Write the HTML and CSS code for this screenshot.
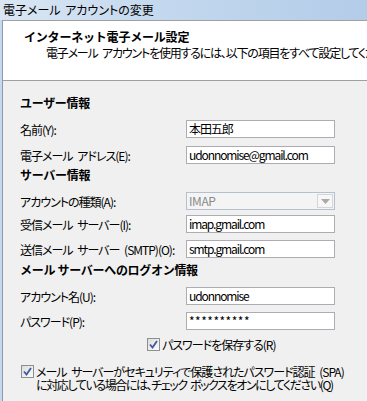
FILE: index.html
```html
<!DOCTYPE html>
<html lang="ja">
<head>
  <meta charset="UTF-8" />
  <title>電子メール アカウントの変更</title>
  <link rel="stylesheet" href="styles.css">
</head>
<body>
  <div class="window">
    <div class="titlebar">電子メール アカウントの変更</div>

    <div class="frame">
      <!-- Header -->
      <div class="header">
        <div class="header-title">インターネット電子メール設定</div>
        <div class="header-sub">電子メール アカウントを使用するには、以下の項目をすべて設定してください。</div>
      </div>

      <!-- Form -->
      <div class="form">
        <div class="section h-user">ユーザー情報</div>
        <div class="row r-name">
          <label class="label">名前(Y):</label>
          <div class="field">本田五郎</div>
        </div>
        <div class="row r-mail">
          <label class="label">電子メール アドレス(E):</label>
          <div class="field">udonnomise@gmail.com</div>
        </div>

        <div class="section h-server">サーバー情報</div>
        <div class="row r-type">
          <label class="label">アカウントの種類(A):</label>
          <div class="combo">
            <span class="combo-text">IMAP</span>
            <span class="combo-btn">
              <svg width="9" height="5" viewBox="0 0 9 5"><path d="M0 0h9L4.5 5z" fill="#a9a9a9"/></svg>
            </span>
          </div>
        </div>
        <div class="row r-in">
          <label class="label">受信メール サーバー(I):</label>
          <div class="field">imap.gmail.com</div>
        </div>
        <div class="row r-out">
          <label class="label">送信メール サーバー (SMTP)(O):</label>
          <div class="field">smtp.gmail.com</div>
        </div>

        <div class="section h-logon">メール サーバーへのログオン情報</div>
        <div class="row r-account">
          <label class="label">アカウント名(U):</label>
          <div class="field">udonnomise</div>
        </div>
        <div class="row r-pass">
          <label class="label">パスワード(P):</label>
          <div class="field pass">**********</div>
        </div>

        <div class="check c-save">
          <span class="box">
            <svg width="9" height="9" viewBox="0 0 9 9"><path d="M1 4.5l2.5 3L8 1" fill="none" stroke="#3d5a9c" stroke-width="1.8"/></svg>
          </span>
          <span class="check-text">パスワードを保存する(R)</span>
        </div>

        <div class="check c-spa">
          <span class="box">
            <svg width="9" height="9" viewBox="0 0 9 9"><path d="M1 4.5l2.5 3L8 1" fill="none" stroke="#3d5a9c" stroke-width="1.8"/></svg>
          </span>
          <span class="check-text">
            <span class="line">メール サーバーがセキュリティで保護されたパスワード認証 (SPA)</span>
            <span class="line tight">に対応している場合には、チェック ボックスをオンにしてください(Q)</span>
          </span>
        </div>
      </div>
    </div>
  </div>
</body>
</html>
```

FILE: styles.css
```css
body {
  margin: 0;
  padding: 0;
  width: 367px;
  height: 401px;
  overflow: hidden;
  background-color: #f0f0f0;
  font-family: "Noto Sans CJK JP", "Liberation Sans", sans-serif;
  font-size: 12px;
  font-feature-settings: "palt";
  letter-spacing: -1px;
  word-spacing: 3px;
  color: #000;
}

.window {
  width: 367px;
  height: 401px;
  overflow: hidden;
}

.titlebar {
  height: 20px;
  line-height: 20px;
  padding-left: 3px;
  white-space: nowrap;
  letter-spacing: 0;
  word-spacing: 2px;
  background: linear-gradient(to right, #dae6f3, #c3d8ee 45%, #b3cce8);
}

.frame {
  border-left: 2px solid #c5d8ee;
  height: 381px;
  position: relative;
}

.frame::before {
  content: "";
  position: absolute;
  left: 0;
  top: 0;
  bottom: 0;
  width: 1px;
  background-color: #8d9aab;
}

.header {
  background-color: #ffffff;
  border-top: 1px solid #a0a0a0;
  border-bottom: 1px solid #a0a0a0;
  height: 59px;
  padding-left: 22px;
  white-space: nowrap;
}

.header-title {
  font-weight: bold;
  line-height: 14px;
  margin-top: 9px;
  font-feature-settings: normal;
  letter-spacing: -0.2px;
}

.header-sub {
  line-height: 14px;
  margin-top: 2px;
  padding-left: 22px;
  letter-spacing: -1.2px;
}

.form {
  padding-left: 18px;
  display: flex;
  flex-direction: column;
}

.section {
  font-weight: bold;
  height: 14px;
  line-height: 14px;
  white-space: nowrap;
  font-feature-settings: normal;
  letter-spacing: -0.3px;
  word-spacing: 0;
}

.row {
  display: flex;
  align-items: center;
  height: 18px;
}

.label {
  width: 166px;
  white-space: nowrap;
}

.field {
  box-sizing: border-box;
  width: 149px;
  height: 18px;
  line-height: 16px;
  border: 1px solid #abadb3;
  background-color: #ffffff;
  padding-left: 2px;
  letter-spacing: -1.1px;
  white-space: nowrap;
}

.pass {
  letter-spacing: 0.5px;
}

.combo {
  box-sizing: border-box;
  width: 149px;
  height: 18px;
  border: 1px solid #b4c0ce;
  background-color: #f4f4f4;
  display: flex;
  align-items: center;
  justify-content: space-between;
}

.combo-text {
  color: #8a8a8a;
  padding-left: 2px;
  letter-spacing: -0.4px;
  line-height: 16px;
}

.combo-btn {
  box-sizing: border-box;
  width: 16px;
  height: 14px;
  margin-right: 1px;
  border: 1px solid #d6d6d6;
  background-color: #f7f7f7;
  display: flex;
  align-items: center;
  justify-content: center;
}

.h-user { margin-top: 15px; }
.r-name { margin-top: 10px; }
.r-mail { margin-top: 8px; }
.h-server { margin-top: 4px; }
.r-type { margin-top: 10px; }
.r-in { margin-top: 5px; }
.r-out { margin-top: 7px; }
.h-logon { margin-top: 5px; }
.r-account { margin-top: 10px; }
.r-pass { margin-top: 7px; }

.check {
  display: flex;
  align-items: flex-start;
}

.box {
  box-sizing: border-box;
  width: 13px;
  height: 13px;
  border: 1px solid #8e8f8f;
  background: linear-gradient(135deg, #dcdcdc, #fbfbfb);
  display: flex;
  align-items: center;
  justify-content: center;
  flex-shrink: 0;
}

.check-text {
  padding-left: 2px;
  line-height: 13px;
  white-space: nowrap;
  display: flex;
  flex-direction: column;
}

.line {
  display: block;
  height: 13px;
}

.tight {
  letter-spacing: -1.4px;
  word-spacing: 2px;
}

.c-save {
  margin-top: 8px;
  margin-left: 127px;
}

.c-spa {
  margin-top: 14px;
  margin-left: 1px;
}
```
